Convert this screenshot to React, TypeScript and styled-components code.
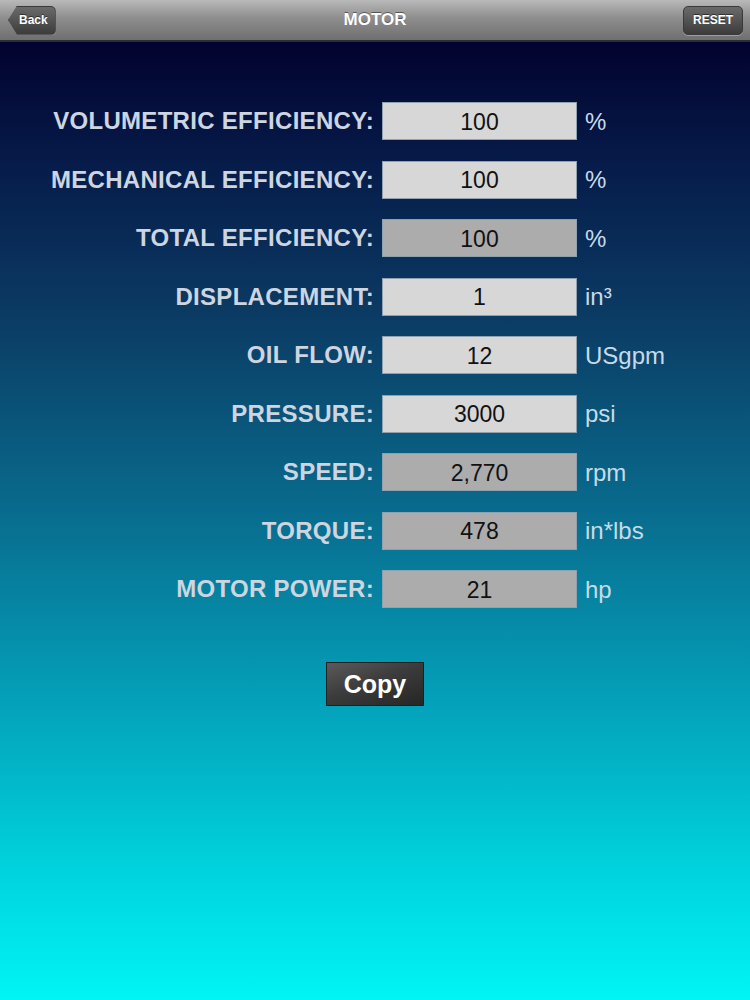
import styled, { createGlobalStyle } from "styled-components";

const GlobalStyle = createGlobalStyle`
  html, body {
    margin: 0;
    padding: 0;
  }
  body {
    font-family: "Liberation Sans", Arial, sans-serif;
  }
`;

const Screen = styled.div`
  width: 750px;
  height: 1000px;
  display: flex;
  flex-direction: column;
  overflow: hidden;
`;

const NavBar = styled.div`
  height: 42px;
  flex-shrink: 0;
  display: flex;
  align-items: center;
  justify-content: space-between;
  padding: 0 7px 0 8px;
  box-sizing: border-box;
  background: linear-gradient(#b9b9b9 0%, #8e8e8e 45%, #6f6f6f 100%);
  border-bottom: 2px solid #2b2d3a;
  position: relative;
`;

const Title = styled.div`
  position: absolute;
  left: 0;
  right: 0;
  text-align: center;
  color: #fff;
  font-weight: bold;
  font-size: 17px;
  text-shadow: 0 -1px 0 rgba(0, 0, 0, 0.45);
  pointer-events: none;
`;

const BarButton = styled.button<{ $back?: boolean }>`
  height: 29px;
  padding: ${(p) => (p.$back ? "0 7px 0 10px" : "0 9px")};
  border: 1px solid #3a3a3a;
  border-radius: 5px;
  background: linear-gradient(#6a6a6a, #3c3c3c);
  color: #fff;
  font-family: "Liberation Sans", Arial, sans-serif;
  font-weight: bold;
  font-size: 12px;
  text-shadow: 0 -1px 0 rgba(0, 0, 0, 0.5);
  box-shadow: 0 1px 0 rgba(255, 255, 255, 0.3);
  position: relative;
  z-index: 1;
  ${(p) =>
    p.$back &&
    `
    clip-path: polygon(9px 0, 100% 0, 100% 100%, 9px 100%, 0 50%);
    border-radius: 0 5px 5px 0;
  `}
`;

const Content = styled.div`
  flex: 1;
  background: linear-gradient(
    #02022e 0%,
    #061a48 12%,
    #0b3e66 30%,
    #087394 52%,
    #03a4bc 70%,
    #00d2dc 86%,
    #00f5f5 100%
  );
  display: flex;
  flex-direction: column;
  align-items: stretch;
  padding-top: 60px;
`;

const Form = styled.div`
  display: flex;
  flex-direction: column;
  gap: 20.5px;
`;

const Row = styled.div`
  display: grid;
  grid-template-columns: 374px 195px 1fr;
  column-gap: 8px;
  align-items: center;
  height: 38px;
`;

const Label = styled.div`
  text-align: right;
  color: #cdd6e0;
  font-weight: bold;
  font-size: 24px;
  letter-spacing: 0.3px;
  white-space: nowrap;
`;

const Field = styled.div<{ $computed?: boolean }>`
  height: 38px;
  box-sizing: border-box;
  border: 1px solid #8fa0ae;
  background: ${(p) => (p.$computed ? "#acacac" : "#d7d7d7")};
  display: flex;
  align-items: center;
  justify-content: center;
  color: #111;
  font-size: 23px;
  padding-top: 2px;
`;

const Unit = styled.div`
  color: #c6dbe8;
  font-size: 24px;
  padding-top: 1px;
`;

const CopyButton = styled.button`
  align-self: center;
  margin-top: 54px;
  width: 98px;
  height: 44px;
  border: 1px solid #1f1f1f;
  background: linear-gradient(160deg, #5a5a5a 0%, #3c3c3c 45%, #262626 100%);
  color: #fff;
  font-family: "Liberation Sans", Arial, sans-serif;
  font-weight: bold;
  font-size: 25px;
`;

type Item = { label: string; value: string; unit: string; computed?: boolean };

const items: Item[] = [
  { label: "VOLUMETRIC EFFICIENCY:", value: "100", unit: "%" },
  { label: "MECHANICAL EFFICIENCY:", value: "100", unit: "%" },
  { label: "TOTAL EFFICIENCY:", value: "100", unit: "%", computed: true },
  { label: "DISPLACEMENT:", value: "1", unit: "in³" },
  { label: "OIL FLOW:", value: "12", unit: "USgpm" },
  { label: "PRESSURE:", value: "3000", unit: "psi" },
  { label: "SPEED:", value: "2,770", unit: "rpm", computed: true },
  { label: "TORQUE:", value: "478", unit: "in*lbs", computed: true },
  { label: "MOTOR POWER:", value: "21", unit: "hp", computed: true },
];

export default function App() {
  return (
    <Screen>
      <GlobalStyle />
      <NavBar>
        <BarButton $back>Back</BarButton>
        <Title>MOTOR</Title>
        <BarButton>RESET</BarButton>
      </NavBar>
      <Content>
        <Form>
          {items.map((it) => (
            <Row key={it.label}>
              <Label>{it.label}</Label>
              <Field $computed={it.computed}>{it.value}</Field>
              <Unit>{it.unit}</Unit>
            </Row>
          ))}
        </Form>
        <CopyButton>Copy</CopyButton>
      </Content>
    </Screen>
  );
}
